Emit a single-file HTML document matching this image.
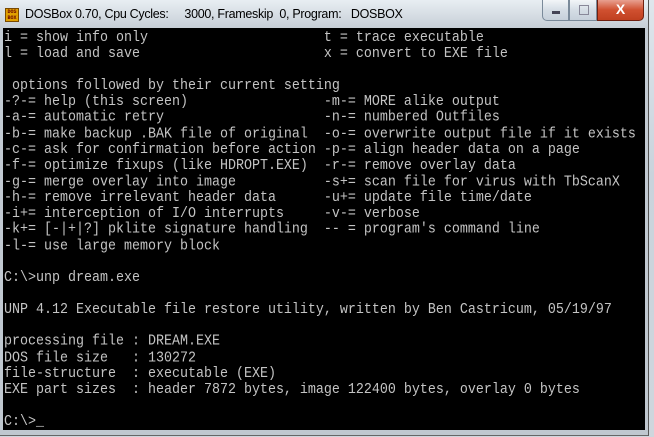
<!DOCTYPE html>
<html><head><style>
html,body{margin:0;padding:0;overflow:hidden;}
body{width:654px;height:437px;position:relative;overflow:hidden;background:linear-gradient(180deg,#dfe6ec 0%,#c9d3dc 40%,#cfd6dd 100%);font-family:"Liberation Sans",sans-serif;}
.frame{position:absolute;left:0;top:0;width:648px;height:435px;border-right:1px solid #555;border-bottom:1px solid #666;background:linear-gradient(180deg,#e8eef3,#c4ccd4 30px,#bfc7cf);}
.icon{position:absolute;left:5px;top:8px;width:14px;height:14px;background:#e0a000;border:1px solid #7a4a00;font:bold 5px "Liberation Mono",monospace;color:#600;line-height:6px;text-align:center;box-sizing:border-box;}
.title{position:absolute;left:25px;top:7px;font-size:12.5px;color:#000;white-space:pre;letter-spacing:-0.3px;}
.b{position:absolute;top:0;height:21px;border:1px solid #7a8a9a;border-top:none;background:linear-gradient(180deg,#f2f5f8,#d5dde5 50%,#c6d0da);box-sizing:border-box;}
.close{background:linear-gradient(180deg,#e8a090,#d05030 50%,#c04020);border-color:#702010;border-radius:0 0 5px 0;color:#fff;font:bold 14px "Liberation Sans",sans-serif;text-align:center;line-height:19px;}
.screen{position:absolute;left:3px;top:28px;width:642px;height:402px;background:#000;overflow:hidden;}
pre{margin:0;position:absolute;left:1px;top:3px;font-family:"Liberation Mono","DejaVu Sans Mono",monospace;font-size:13.33px;line-height:14.286px;color:#c4c4c4;transform:scaleY(1.12);transform-origin:0 0;}
</style></head><body>
<div class="frame"></div>
<div class="icon">DOS<br>BOX</div>
<div class="title">DOSBox 0.70, Cpu Cycles:     3000, Frameskip  0, Program:   DOSBOX</div>
<div class="b" style="left:542px;width:27px;border-radius:0 0 0 5px"><div style="position:absolute;left:9px;top:11px;width:8px;height:3px;background:#445;"></div></div>
<div class="b" style="left:569px;width:28px"><div style="position:absolute;left:9px;top:5px;width:8px;height:8px;border:1px solid #889;"></div></div>
<div class="b close" style="left:597px;width:47px">X</div>
<div class="screen"><pre>i = show info only                      t = trace executable
l = load and save                       x = convert to EXE file

 options followed by their current setting
-?-= help (this screen)                 -m-= MORE alike output
-a-= automatic retry                    -n-= numbered Outfiles
-b-= make backup .BAK file of original  -o-= overwrite output file if it exists
-c-= ask for confirmation before action -p-= align header data on a page
-f-= optimize fixups (like HDROPT.EXE)  -r-= remove overlay data
-g-= merge overlay into image           -s+= scan file for virus with TbScanX
-h-= remove irrelevant header data      -u+= update file time/date
-i+= interception of I/O interrupts     -v-= verbose
-k+= [-|+|?] pklite signature handling  -- = program's command line
-l-= use large memory block

C:\&gt;unp dream.exe

UNP 4.12 Executable file restore utility, written by Ben Castricum, 05/19/97

processing file : DREAM.EXE
DOS file size   : 130272
file-structure  : executable (EXE)
EXE part sizes  : header 7872 bytes, image 122400 bytes, overlay 0 bytes

C:\&gt;_</pre></div>
</body></html>
